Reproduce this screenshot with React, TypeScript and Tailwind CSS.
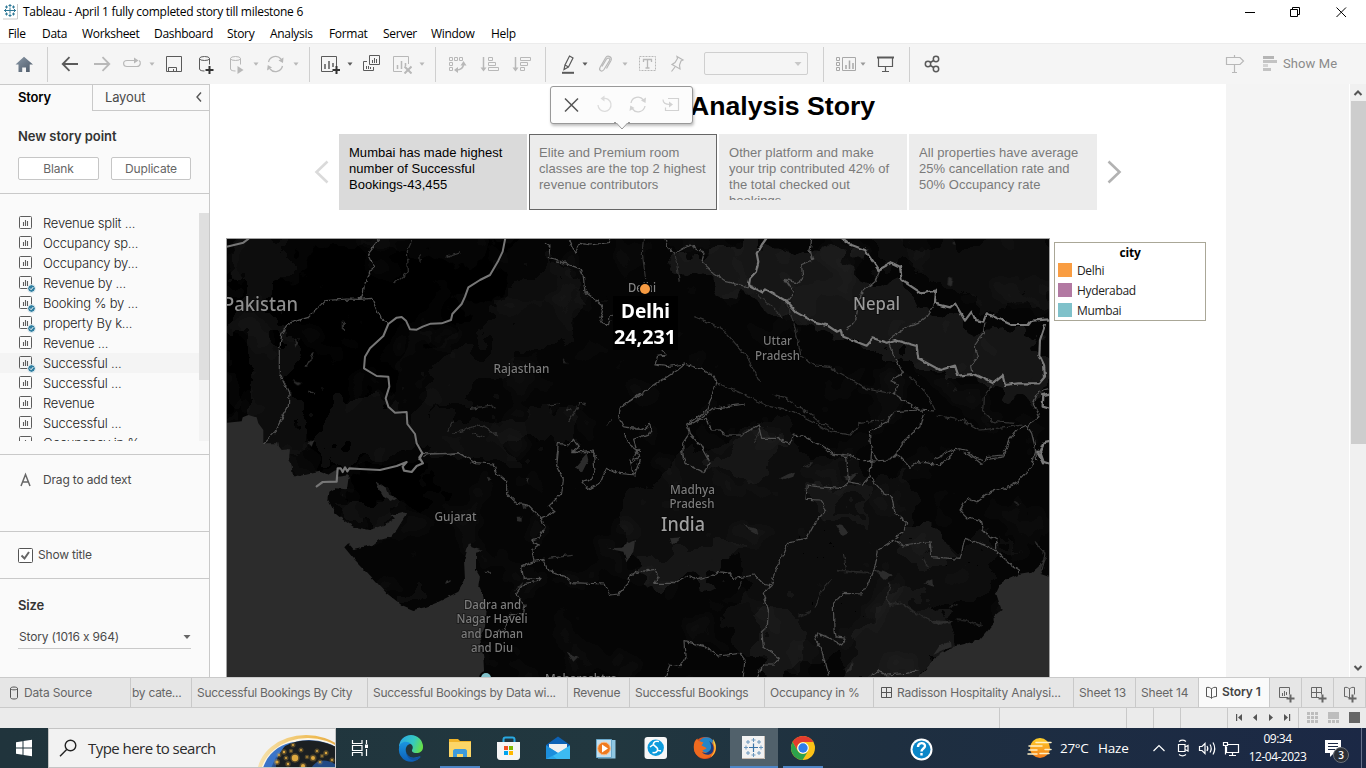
import type { ReactNode } from "react";

type Kids = { children?: ReactNode };

function Icon({ x, y = 54, w = 20, h = 20, className = "", children }: { x: number; y?: number; w?: number; h?: number; className?: string } & Kids) {
  return (
    <svg width={w} height={h} viewBox={`${x} ${y} ${w} ${h}`} fill="none" stroke="currentColor" className={`shrink-0 ${className}`}>
      {children}
    </svg>
  );
}

function Caret({ className }: { className: string }) {
  return (
    <svg width="6" height="20" viewBox="0 0 6 20" className={`shrink-0 ${className}`}>
      <path d="M0.5 8.5h5L3 11.8z" fill="currentColor" />
    </svg>
  );
}

const Divider = ({ className }: { className: string }) => <div className={`-mt-[7px] h-[35px] w-px shrink-0 bg-[#cfcfcf] ${className}`} />;

const DARK = "text-[#5a5a5a]";
const MUTED = "text-[#b8b8b8]";

function TitleBar() {
  return (
    <header className="flex h-[23px] shrink-0 items-center bg-white">
      <Icon x={2} y={3} w={17} h={17} className="ml-[2px] text-[#2f7896]">
        <path d="M17.5 4v15H3" stroke="#c9c9c9" />
        <path d="M10 7.5v6M7 10.500h6M10 4v3M8.500 5.500h3M10 14v3M8.500 15.500h3M4 10.500h3M5.500 9v3M13 10.500h3M14.500 9v3M6.500 5.500v3M5 7h3M13.500 5.500v3M12 7h3M6.500 12.500v3M5 14h3M13.500 12.500v3M12 14h3" />
      </Icon>
      <h1 className="ml-[4px] whitespace-nowrap pt-px font-['Open_Sans',sans-serif] text-[12px] tracking-[-0.28px] text-black">Tableau - April 1 fully completed story till milestone 6</h1>
      <Icon x={1244} y={3} w={14} h={14} className="ml-auto mr-[30px] text-black">
        <path d="M1245 10.500h10" />
      </Icon>
      <Icon x={1288} y={3} w={14} h={14} className="mr-[32px] text-black">
        <path d="M1290.500 7.500h7v7h-7zM1292.500 7v-1.500h7v7h-2" />
      </Icon>
      <Icon x={1334} y={3} w={14} h={14} className="mr-[18px] text-black">
        <path d="M1336.500 5.500l9.500 9.500M1346 5.500l-9.500 9.500" />
      </Icon>
    </header>
  );
}

const MENU: [string, string][] = [
  ["File", "w-[34px]"],
  ["Data", "w-[40px]"],
  ["Worksheet", "w-[72px]"],
  ["Dashboard", "w-[73px]"],
  ["Story", "w-[43px]"],
  ["Analysis", "w-[59px]"],
  ["Format", "w-[54px]"],
  ["Server", "w-[48px]"],
  ["Window", "w-[60px]"],
  ["Help", "w-[40px]"],
];

function MenuBar() {
  return (
    <nav className="flex h-[20px] shrink-0 items-center bg-white pl-[8px] pt-[2px] font-['Open_Sans',sans-serif] text-[12px] tracking-[-0.32px] text-black">
      {MENU.map(([label, width]) => (
        <span key={label} className={`${width} shrink-0`}>{label}</span>
      ))}
    </nav>
  );
}

function Toolbar() {
  return (
    <div className="flex h-[41px] shrink-0 items-start border-t border-[#ececec] bg-[#f5f5f5] pt-[10px]">
      <Icon x={14} className="ml-[14px]">
        <defs>
          <linearGradient id="home" x1="0" y1="0" x2="1" y2="1">
            <stop offset="0" stopColor="#8b99a8" />
            <stop offset="1" stopColor="#4a5766" />
          </linearGradient>
        </defs>
        <path d="M24 56.700L15.500 64.500h3V72h3.700v-4.500h3.800V72h3.700v-7.500H33z" fill="url(#home)" stroke="none" />
      </Icon>
      <Divider className="ml-[13px]" />
      <Icon x={60} className={`ml-[12px] ${DARK}`}>
        <path d="M62.500 64H78M69.500 57.200L62.700 64l6.800 6.800" strokeWidth="1.8" />
      </Icon>
      <Icon x={92} className={`ml-[12px] ${MUTED}`}>
        <path d="M94 64h15.500M102.500 57.200l6.800 6.800-6.800 6.800" strokeWidth="1.800" />
      </Icon>
      <Icon x={122} className={`ml-[10px] ${MUTED}`}>
        <path d="M139 60.500c2 1 2 6-2 6h-10c-4.500 0-4.500-6 0-6h8" strokeWidth="1.200" />
        <path d="M134 57.500l4.500 3-4.500 3z" fill="currentColor" stroke="none" />
      </Icon>
      <Caret className={`ml-[7px] ${MUTED}`} />
      <Icon x={164} className={`ml-[9px] ${DARK}`}>
        <path d="M166.500 56.500h15v15h-15zM168.500 71v-3.500h8V71M173.500 71v-2" />
      </Icon>
      <Icon x={196} className={`ml-[12px] ${DARK}`}>
        <ellipse cx="204.500" cy="58.500" rx="5" ry="2" />
        <path d="M199.500 58.500v10.500c0 1.500 3 2 5 2M209.500 58.500v6" />
        <path d="M209.500 66v8M205.500 70h8" strokeWidth="2" stroke="#333" />
      </Icon>
      <Icon x={226} className={`ml-[10px] ${MUTED}`}>
        <ellipse cx="235.500" cy="58.500" rx="5" ry="2" />
        <path d="M230.500 58.500v10.500c0 1.500 3 2 5 2M240.500 58.500v6" />
        <path d="M237.500 66l6 4-6 4z" fill="currentColor" stroke="none" />
      </Icon>
      <Caret className={`ml-[7px] ${MUTED}`} />
      <Icon x={266} className={`ml-[7px] ${MUTED}`}>
        <path d="M268.500 62a7.200 7.200 0 0 1 12.500-3M282.500 66a7.200 7.200 0 0 1-12.500 3" strokeWidth="1.300" />
        <path d="M283.500 57.500l-.5 5.500-4.500-2.500zM267 70.500l.8-5.500 4.200 2.500z" fill="currentColor" stroke="none" />
      </Icon>
      <Caret className={`ml-[7px] ${MUTED}`} />
      <Divider className="ml-[10px]" />
      <Icon x={320} className={`ml-[10px] ${DARK}`}>
        <path d="M333 71.500h-11.500v-15h15V67" />
        <path d="M325 64v5M329 61v8M333 63v4" strokeWidth="1.500" />
        <path d="M336.500 66v8M332.500 70h8" strokeWidth="2" stroke="#333" />
      </Icon>
      <Caret className={`ml-[7px] ${DARK}`} />
      <Icon x={361} className={`ml-[8px] ${DARK}`}>
        <path d="M369.500 55.500h10v9h-10zM367 61.500h-3.500v9h10V67" />
        <path d="M372.500 60v3M374.500 58v5M376.500 59v4M366.500 66v3M368.500 66v3M370.500 67v2" />
      </Icon>
      <Icon x={392} className={`ml-[11px] ${MUTED}`}>
        <path d="M402 71.500h-8.500v-15h15V64" />
        <path d="M397.500 65v4M401.500 61v8M405.500 63v3" strokeWidth="1.500" />
        <path d="M404.500 66.500l7 7M411.500 66.500l-7 7" strokeWidth="2" />
      </Icon>
      <Caret className={`ml-[7px] ${MUTED}`} />
      <Divider className="ml-[10px]" />
      <Icon x={448} className={`ml-[12px] ${MUTED}`}>
        <path d="M449.500 57.500h3v3h-3zM454.500 57.500h3v3h-3zM459.500 57.500h3v3h-3zM449.500 62.500h3v3h-3zM449.500 67.500h3v3h-3z" />
        <path d="M456 70c5 0 7.500-2 7.500-6.500" strokeWidth="1.500" />
        <path d="M458 67v6l-4-3zM460.500 65.500h6L463.500 61z" fill="currentColor" stroke="none" />
      </Icon>
      <Icon x={480} className={`ml-[12px] ${MUTED}`}>
        <path d="M483.500 57v12" strokeWidth="1.500" />
        <path d="M480.500 67.500h6l-3 4z" fill="currentColor" stroke="none" />
        <path d="M488.500 57.500h4v3h-4zM488.500 62.500h7v3h-7zM488.500 67.500h10v3h-10z" />
      </Icon>
      <Icon x={512} className={`ml-[12px] ${MUTED}`}>
        <path d="M515.500 57v12" strokeWidth="1.500" />
        <path d="M512.500 67.500h6l-3 4z" fill="currentColor" stroke="none" />
        <path d="M520.500 57.500h10v3h-10zM520.500 62.500h7v3h-7zM520.500 67.500h4v3h-4z" />
      </Icon>
      <Divider className="ml-[13px]" />
      <Icon x={558} className={`ml-[12px] ${DARK}`}>
        <path d="M569.500 56l3.500 2-4.500 9-3.500-2zM565 65l-1 4.500 4.500-2.500" strokeWidth="1.200" />
        <path d="M562 72.800h12" strokeWidth="2" />
      </Icon>
      <Caret className={`ml-[4px] ${DARK}`} />
      <Icon x={596} className={`ml-[8px] ${MUTED}`}>
        <path d="M602 66.500l4.500-7.500c1.500-2 4-.5 3 1.500l-5.500 9c-2 3-5.500 1-4-2l5.500-9.500c2-3.500 7-1 5.500 2.500l-4.500 8" strokeWidth="1.200" />
      </Icon>
      <Caret className={`ml-[6px] ${MUTED}`} />
      <Icon x={638} className={`ml-[10px] ${MUTED}`}>
        <path d="M639.500 56.500h16v14h-16z" strokeDasharray="2 1" />
        <path d="M643.500 62v-2.500h8V62M647.500 59.500v8M645.500 68h4" strokeWidth="1.300" />
      </Icon>
      <Icon x={668} className={`ml-[10px] ${MUTED}`}>
        <path d="M677 56.500l6 3.500-2 1-1.500 4 .5 4-8-4.500 3-2 2.500-4zM675 67l-3.500 4.500" strokeWidth="1.200" />
      </Icon>
      <div className="-mt-[2px] ml-[16px] flex h-[23px] w-[104px] shrink-0 items-center justify-end rounded-[2px] border border-[#cfcfcf] pr-[5px]">
        <svg width="8" height="6" viewBox="0 0 8 6"><path d="M.5 1h7L4 5z" fill="#c8c8c8" /></svg>
      </div>
      <Divider className="ml-[15px]" />
      <Icon x={836} className="ml-[12px] text-[#a8a8a8]">
        <path d="M836.500 57.500h3v3h-3zM836.500 62.500h3v3h-3zM836.500 67.500h3v3h-3zM842.500 57.500h13v13h-13z" />
        <path d="M846 65v4M849.500 60.500V69M853 63v6" strokeWidth="1.500" />
      </Icon>
      <Caret className="ml-[4px] text-[#999]" />
      <Icon x={876} className={`ml-[10px] ${DARK}`}>
        <path d="M877 57.500h17" strokeWidth="2" />
        <path d="M878.500 58v8.500h14V58M885.500 66.500v5M882 71.500h7" strokeWidth="1.200" />
      </Icon>
      <Divider className="ml-[13px]" />
      <Icon x={922} className={`ml-[12px] ${DARK}`}>
        <g strokeWidth="1.500">
          <circle cx="928" cy="64" r="2.700" />
          <circle cx="936" cy="59" r="2.700" />
          <circle cx="936" cy="69" r="2.700" />
          <path d="M930.300 62.500l3.400-2M930.300 65.500l3.400 2" />
        </g>
      </Icon>
      <Icon x={1225} className={`ml-[283px] ${MUTED}`}>
        <path d="M1234.500 55v2M1226.500 57.500h13.500l3.500 3.500-3.500 3.500h-13.500zM1234.500 65v7M1232 72.500h5" strokeWidth="1.200" />
      </Icon>
      <Icon x={1260} className="ml-[15px]">
        <g stroke="none" fill="#b5b5b5">
          <path d="M1263 56h11v3h-11z" />
          <path d="M1263 60h14v3h-14zM1263 68h8v3h-8z" fill="#c3c3c3" />
          <path d="M1263 64h5v3h-5z" fill="#d4d4d4" />
        </g>
      </Icon>
      <span className="ml-[3px] whitespace-nowrap font-[Roboto,sans-serif] text-[13px] leading-[20px] tracking-[0.1px] text-[#8a8a8a]">Show Me</span>
    </div>
  );
}

const SHEETS: [string, boolean][] = [
  ["Revenue split ...", false],
  ["Occupancy sp...", false],
  ["Occupancy by...", false],
  ["Revenue by ...", true],
  ["Booking % by ...", true],
  ["property By k...", true],
  ["Revenue ...", false],
  ["Successful ...", true],
  ["Successful ...", false],
  ["Revenue", false],
  ["Successful ...", false],
  ["Occupancy in %", false],
];

function SheetIcon({ used }: { used: boolean }) {
  return (
    <svg width="18" height="20" viewBox="0 0 18 20" fill="none" stroke="#5c5c5c" className="shrink-0">
      <rect x="1.500" y="3.500" width="12" height="12" rx="1" />
      <path d="M5.500 9v4M7.500 7v6M9.500 8v5" strokeWidth="1.100" />
      {used && (
        <>
          <circle cx="13.500" cy="15.500" r="3.900" fill="#2f7ea0" stroke="#fafafa" />
          <path d="M11.800 15.400l1.300 1.300 2.200-2.600" stroke="#fff" />
        </>
      )}
    </svg>
  );
}

function Sidebar() {
  return (
    <aside className="flex w-[210px] shrink-0 flex-col border-r border-t border-[#c9c9c9] bg-[#fafafa] font-[Inter,'Open_Sans',sans-serif] text-[12px] tracking-[-0.17px] text-[#4a4a4a] [font-variant-ligatures:none]">
      <div className="flex h-[26px] shrink-0">
        <div className="w-[92px] pl-[18px] pt-[3px] text-[13px] font-semibold leading-[18px] text-black">Story</div>
        <div className="flex flex-1 items-start justify-between border-b border-l border-[#c9c9c9] pl-[12px] pr-[7px] pt-[3px] text-[13px] leading-[18px]">
          Layout
          <svg width="6" height="10" viewBox="0 0 6 10" className="mt-[4px]"><path d="M5 .5L1 5l4 4.500" fill="none" stroke="#555" strokeWidth="1.400" /></svg>
        </div>
      </div>
      <div className="h-[83px] shrink-0 border-b border-[#c9c9c9] pl-[18px] pt-[16px]">
        <h2 className="text-[13px] font-semibold leading-[18px] tracking-[-0.06px] text-[#333]">New story point</h2>
        <div className="mt-[12px] flex gap-[12px] leading-[20px] text-[#666]">
          <button className="h-[23px] w-[81px] rounded-[2px] border border-[#c6c6c6] bg-white tracking-[-0.17px]">Blank</button>
          <button className="h-[23px] w-[80px] rounded-[2px] border border-[#c6c6c6] bg-white tracking-[-0.17px]">Duplicate</button>
        </div>
      </div>
      <div className="h-[261px] shrink-0 border-b border-[#c9c9c9] pt-[19px]">
        <div className="flex h-[228px] overflow-hidden">
          <ul className="w-[199px]">
            {SHEETS.map(([name, used], i) => (
              <li key={i} className={`flex h-[20px] items-center pl-[18px] text-[13px] ${i === 7 ? "bg-[#f4f4f4]" : ""}`}>
                <SheetIcon used={used} />
                <span className="ml-[7px] whitespace-nowrap font-light leading-[20px] tracking-[-0.2px] text-[#222]">{name}</span>
              </li>
            ))}
          </ul>
          <div className="w-[10px] bg-[#f3f3f3]"><div className="h-[167px] bg-[#dfdfdf]" /></div>
        </div>
      </div>
      <div className="flex h-[77px] shrink-0 items-start border-b border-[#c9c9c9] pl-[20px] pt-[15px]">
        <svg width="12" height="20" viewBox="0 0 12 20"><path d="M1 16L5.500 4.500 10 16M2.500 12h6" fill="none" stroke="#666" strokeWidth="1.500" /></svg>
        <span className="ml-[11px] leading-[20px]">Drag to add text</span>
      </div>
      <div className="flex h-[47px] shrink-0 items-center border-b border-[#c9c9c9] pl-[18px]">
        <svg width="15" height="15" viewBox="0 0 15 15" fill="none"><rect x=".5" y=".5" width="14" height="14" rx="1" stroke="#555" fill="#fff" /><path d="M3.500 7.500l3 3L11 4" stroke="#666" strokeWidth="2" /></svg>
        <span className="ml-[5px]">Show title</span>
      </div>
      <div className="pl-[18px] pt-[17px]">
        <h2 className="text-[13px] font-semibold leading-[18px] text-[#333]">Size</h2>
        <div className="mt-[13px] flex h-[22px] w-[173px] items-center justify-between border-b border-[#c9c9c9] pb-px pl-[1px]">
          Story (1016 x 964)
          <svg width="8" height="6" viewBox="0 0 8 6"><path d="M0.500 1h7L4 5z" fill="#666" /></svg>
        </div>
      </div>
    </aside>
  );
}

/* Map tiles: each quadrant is drawn on its own 3x grid. */
const NW = "translate(220 230) scale(.33333)";
const NE = "translate(630 230) scale(.33333)";
const SW = "translate(220 450) scale(.33333)";
const SE = "translate(630 450) scale(.33333)";

const LABELS: [string, number, number, number, number, string][] = [
  ["Pakistan", 223, 311, 75, 19, "#8f8f8f"],
  ["Nepal", 853, 310, 47, 18, "#9a9a9a"],
  ["India", 661, 531, 44, 19, "#a0a0a0"],
  ["Rajasthan", 493.500, 373, 56, 12, "#7c7c7c"],
  ["Uttar", 763, 345, 29, 12, "#7c7c7c"],
  ["Pradesh", 755, 360, 45, 12, "#7c7c7c"],
  ["Gujarat", 434.500, 521, 42, 12, "#7c7c7c"],
  ["Madhya", 670, 494, 45, 12, "#7c7c7c"],
  ["Pradesh", 669.500, 508, 45, 12, "#7c7c7c"],
  ["Dadra and", 464, 609, 57, 12, "#7c7c7c"],
  ["Nagar Haveli", 456.500, 623, 71, 12, "#7c7c7c"],
  ["and Daman", 461, 638, 62, 12, "#7c7c7c"],
  ["and Diu", 471, 652, 42, 12, "#7c7c7c"],
  ["Maharashtra", 545, 683, 72, 12, "#7c7c7c"],
];

function CityMap() {
  return (
    <svg width="822" height="438" viewBox="227 239 822 438" fill="none" className="block">
      <defs>
        <filter id="rough" x="227" y="239" width="822" height="438" filterUnits="userSpaceOnUse">
          <feTurbulence type="fractalNoise" baseFrequency=".16" numOctaves="3" seed="4" />
          <feDisplacementMap in="SourceGraphic" scale="5" xChannelSelector="R" yChannelSelector="G" />
        </filter>
        <filter id="soft" x="227" y="239" width="822" height="438" filterUnits="userSpaceOnUse" colorInterpolationFilters="sRGB">
          <feTurbulence type="fractalNoise" baseFrequency=".13" numOctaves="2" seed="4" />
          <feDisplacementMap in="SourceGraphic" scale="4" xChannelSelector="R" yChannelSelector="G" />
        </filter>
        <filter id="terrain" x="227" y="239" width="822" height="438" filterUnits="userSpaceOnUse">
          <feTurbulence type="fractalNoise" baseFrequency=".035" numOctaves="3" seed="9" />
          <feDisplacementMap in="SourceGraphic" scale="60" xChannelSelector="R" yChannelSelector="G" />
        </filter>
        <filter id="relief" x="227" y="239" width="822" height="438" filterUnits="userSpaceOnUse" colorInterpolationFilters="sRGB">
          <feTurbulence type="fractalNoise" baseFrequency=".022" numOctaves="3" seed="21" />
          <feColorMatrix values="0 0 0 0 1  0 0 0 0 1  0 0 0 0 1  1 0 0 0 0" />
          <feComponentTransfer>
            <feFuncA type="discrete" tableValues="0 0 0 0 0 0 .015 .025 .032 .032" />
          </feComponentTransfer>
        </filter>
      </defs>
      <rect x="227" y="239" width="822" height="438" fill="#050505" />

      <g filter="url(#terrain)">
        <g fill="#000">
          <path d="M227 280h60l30-40 70 0 80 30 40-40-10 60-60 40-60 60-20 30 40 30-60 20-50-60-60 20z" />
          <path d="M227 350h20v80h-20zM350 470h80v30h-60z" />
        </g>
        <g fill="#0e0e0e">
          <path d="M235 239h60l-20 40 10 60 20 100-20 20-50-10 20-60-20-60zM500 290l50-30 40 30-10 50-60 20-80 60-30 10 20-60 60-30zM400 430l80-20 100 0 0 30-80 20-60 0z" />
          <path d="M330 400l60-10 30 50-40 20-50 0zM330 490l60 10 0 30-40-10zM395 590l30 5 0 12-30 0z" />
          <path d="M690 440l90-20 40 40 90 10 0 80 90-10-20 60-80 20 0 50-80-10-30 30-60-60 20-60-110 0-30-60 50-30z" />
          <path d="M860 239h189v60l-60 10-60-30-50-20z" />
        </g>
        <g fill="#171717">
          <path d="M690 245l70-5 90 10 40 40 40 25 60 20 50-5-5 70-80-20-80-40-100-20-60-40-40-10z" />
          <path d="M730 440l40-10 10 20-30 30-40-10zM810 490l50-5 10 40-50 0zM640 570l70-30 40 10-40 25-60 10zM880 600l50 0 30 20-40 60h-60l-10-40zM760 610l40 0 10 60-50 6z" />
          <path d="M890 540l40-20 30 30-40 20z" />
        </g>
        <g fill="#070707">
          <path d="M790 545l50-5 30 30-20 35-50-5zM840 500l20 0 0 15-20 0zM940 560l40 5 0 30-40 0z" />
        </g>
      </g>
      <rect x="227" y="239" width="822" height="438" filter="url(#relief)" />

      {/* Seas */}
      <g fill="#2c2c2c">
        <path transform={NW} d="M20 578L65 574L68 562L85 555L110 562L115 580L130 600L130 642L165 655L178 650L185 660L210 658L205 690L20 690z" />
        <g filter="url(#soft)">
          <path transform={SW} d="M-20 -20L172 -20L175 0L190 5L205 0L205 30L215 45L218 75L240 78L300 65L325 76L350 60L353 80L390 75L385 110L380 118L345 115L328 125L325 150L345 190L370 210L400 230L450 240L490 225L525 205L512 196L545 187L562 190L545 215L530 240L510 262L480 270L460 285L430 290L400 297L385 280L373 292L400 325L440 365L500 430L545 465L580 480L615 472L650 458L715 425L735 390L732 330L747 278L755 292L788 302L768 308L768 360L780 380L775 410L790 440L800 480L795 530L780 565L790 620L795 720L-20 720z" />
          <path transform={SE} d="M1300 395L1232 372L1250 320L1225 350L1205 368L1165 375L1130 390L1110 405L1098 430L1115 480L1090 500L1092 520L1050 570L970 590L920 620L870 675L860 720L1300 720z" />
          <path transform={SE} d="M910 615L930 585L960 575L962 590L930 605z" />
          <g transform={SW}>
            <path d="M465 90L500 115L508 135L528 142L512 153L490 140L478 120z" />
            <path d="M1160 295L1205 293L1225 280L1245 270L1240 305L1220 335L1210 305zM1065 50L1100 10L1105 30L1085 70zM800 83L815 88L805 93zM890 200L905 200L905 215L892 213zM1040 605L1075 620L1060 635zM880 425L910 395L905 410zM905 160L930 165L910 178z" />
          </g>
          <g transform={SE}>
            <path d="M450 85L475 72L495 68L490 80L462 90zM640 80L685 68L660 95L648 90zM338 220L360 235L385 240L388 255L350 235zM618 225L640 228L655 250L638 258zM735 360L760 362L790 375L765 390zM880 400L910 388L912 410zM865 490L905 510L970 515L925 525zM120 265L155 262L125 285zM650 670L668 632L665 660z" />
          </g>
          <g transform={NE}>
            <path d="M955 140L970 145L965 170L952 165zM970 32L978 45L968 42z" />
          </g>
          <g transform={NW}>
            <path d="M225 325L235 340L228 350zM215 450L245 460L235 466zM195 395L205 410zM265 640L285 625L275 650zM1028 388L1045 398L1030 396z" />
          </g>
        </g>
      </g>

      {/* Rivers */}
      <g filter="url(#rough)" stroke="#343434" strokeWidth="3.500">
        <path transform={NW} d="M575 30L562 60L565 125L520 160M600 75V95M680 82L722 68M370 275V300M280 370L258 410M265 480L285 492M750 535L790 530L810 525L830 535M985 525L1020 522M1040 537L1055 540M1045 575L1080 515L1095 522M680 605L697 575M697 610L735 600L775 585L810 600L830 618M757 610L795 622M1160 590L1175 568" />
        <path transform={NE} d="M40 28L37 70L47 150M135 70L148 155M193 260L245 280L285 305L320 345L350 378L390 455M380 190L420 225L460 265M468 215L495 290L512 375L555 408L600 412L650 440L705 475L790 492M260 458L310 480L365 505L420 530L490 545L550 575L600 605L665 615L690 580L760 570M425 495L465 505L520 540L565 572L610 600M840 440L890 490L915 540M920 555L1000 572L1050 600L1130 592L1175 585M1090 460L1060 500L1058 545L1090 575L1155 580M370 640L390 600" />
        <path transform={SW} d="M985 325L1058 316M795 367L812 368M673 400L692 392M925 85L920 100" />
        <path transform={SE} d="M640 310L650 360M618 362L720 368M555 475L570 430L605 385M505 500L540 485M780 400L770 450L780 465L815 460L855 490L925 520L970 512M980 507L1020 515L1055 527M880 325L895 355M955 475L980 462M1215 275L1245 310L1235 370M1150 155L1168 165M522 50L545 38M325 415L335 395" />
      </g>

      {/* State borders */}
      <g filter="url(#rough)" stroke="#525252" strokeWidth="3.700" strokeLinejoin="round">
        <path transform={NW} d="M475 30L443 70L462 110L433 160L430 190L418 208M418 208L380 207L318 212L265 262L205 280L185 315L178 360L178 430L207 490L205 530L180 575L165 605L130 640M418 208L455 205L470 240L480 262L505 280M975 40L990 50L985 85L1020 95L1078 115L1090 140L1095 185L1140 220L1150 245L1138 275L1165 287L1170 262L1178 255M1045 28L1065 70L1080 40L1110 45L1165 38L1170 28M607 680L640 670L690 672L715 668L745 685M1260 490L1220 520L1200 535L1197 565L1210 590L1245 595L1260 590M1010 690L1015 640L1050 645L1060 628L1075 650L1055 665L1095 665L1120 670L1135 690M1212 610L1225 640L1260 665" />
        <path transform={NE} d="M105 30L115 55L135 70L180 45L222 70L215 98L245 125L290 155L350 170L370 170M545 30L540 60L548 90L515 105L518 140L505 160L465 148L490 185L470 213M750 120L735 155L705 180L690 195L678 265L650 300M910 225L890 260L865 280L835 290L785 320L770 340M1065 275L1060 310L1035 345L1045 380L1025 405L1028 430M780 340L790 375L820 430L780 450L805 465L790 492L865 540L915 543M0 515L60 475L150 415L165 402L110 410L75 405L82 380L105 375L90 345M165 402L215 418L245 435L260 458L230 540L190 570L170 582L178 610L158 640L160 690M0 597L40 598L60 580L65 608L10 628L20 660L8 690M170 582L230 565L245 600L275 600L280 615L335 615L385 585L395 625L440 625L480 640L490 615L525 620L590 655L610 670L655 675L690 690M190 580L245 535L290 530L345 522M178 610L210 645L235 690M910 690L975 655L1010 660L1030 680L1065 690L1120 680L1135 635L1160 600L1190 585L1205 610L1215 650L1220 690M1190 585L1230 560L1210 520L1225 485L1258 475M865 540L795 545L770 575L718 605L722 650L740 690M880 550L870 590L830 625L790 685" />
        <path transform={SW} d="M607 10L640 12L715 8L765 38L820 42L830 70L860 95L860 130L890 160L925 165L965 205L975 235L960 262L935 270L955 285L935 300L942 335L905 350L910 385L960 382L950 395L915 400L890 430L915 465L910 495L870 490L855 540L830 545M965 203L1005 185L985 170L1025 130L1030 90L1010 50L1015 0M942 335L970 328L985 365L1035 380L1055 398L1155 402L1170 435L1195 432L1225 400L1230 375L1258 360M1050 0L1080 5L1120 0L1125 65L1115 85L1085 95L1105 118L1140 100L1160 55L1200 70L1245 75L1258 30" />
        <path transform={SE} d="M0 378L30 365L75 358L85 380L75 400L130 400L170 378L200 390L240 380L265 365L300 370L310 385L375 375L400 402L425 408M425 408L435 360L455 320L475 275L530 265L560 210L590 180L570 150L528 148L532 105L560 110L630 115L655 95L650 20L595 10L590 0M655 95L700 105L720 80L725 0M720 80L760 130L785 140L795 190L830 215L820 245L790 270L745 300L735 350L715 400L695 432L640 430L610 460L612 540L615 560M790 270L820 285L900 275L905 320L990 328L1005 265L1050 280L1095 300L1145 345L1168 360L1168 375M425 408L400 430L415 480L412 530L395 545L400 590L448 625L430 645L400 645L382 680M105 680L120 645L150 650L168 620L165 575L225 590L265 618L330 610L345 630L340 680M155 0L165 40L220 68L240 40L230 10M595 680L580 620L572 590L555 570L565 550L600 565L635 585L648 565L615 560M700 35L780 30L800 10L840 52L865 35L930 45L970 10L975 0M1000 5L1040 30L1058 45L1070 20L1120 15L1125 0M1218 0L1205 50L1165 95L1130 115L1080 125L1040 158L1010 145L990 180L1015 205L1055 215L1060 245L1100 270L1100 305M1100 305L1145 345M0 30L10 75M15 0L30 20L5 40M720 680L748 662L770 675L830 670L865 662" />
      </g>

      {/* Country borders */}
      <g stroke="#777" strokeLinejoin="round" strokeLinecap="round">
        <path transform={NW} strokeWidth="6" d="M20 50L70 38L85 27M856 24L848 65L835 92L810 135L780 150L745 172L735 200L725 222L697 252L693 270L665 280L632 281L608 290L590 299L570 298L558 272L545 261L530 263L505 282L490 318L450 355L435 380L432 415L470 438L505 440L508 470L497 505L505 530L525 548L560 546L562 582L585 612L590 640L607 670L598 688" />
        <path transform={SW} strokeWidth="6.500" d="M607 10L598 22L609 40L590 48L575 66L552 62L548 50L560 36L530 48L480 60L420 57L388 55L382 64L375 52L368 66L362 55L353 55L350 95L308 96L290 109" />
        <g filter="url(#soft)" stroke="#7a7a7a">
          <path transform={NE} strokeWidth="6.500" d="M410 24L395 45L380 70L385 95L378 125L360 145L357 165L398 188L408 178L468 213L500 248L550 275L590 285L620 305L635 300L640 320L710 347L730 325L770 338L795 330L860 348L865 385L930 420L975 407L985 437L1030 432L1090 460L1118 437L1125 465L1165 460L1228 460L1245 440L1242 405L1228 375L1230 330L1245 285M635 24L665 45L705 60L745 120L785 98L810 110L815 150L875 190L915 182L912 220L960 232L975 220L1005 272L1025 245L1035 270L1060 275L1070 250L1145 285L1195 285L1205 272L1258 268" />
          <path transform={NE} strokeWidth="7" d="M1262 490L1240 495L1238 530L1262 537M1262 635L1240 640L1230 665L1242 700" />
          <path transform={SE} strokeWidth="6" d="M1222 5L1240 35L1262 42" />
        </g>
      </g>

      <text x="628" y="292" fontSize="12" fontWeight="500" fill="#858585" fontFamily="'Noto Sans'" textLength="28" lengthAdjust="spacingAndGlyphs">Delhi</text>
      {LABELS.map(([label, x, y, width, size, fill]) => (
        <text key={label + x} x={x} y={y} fontSize={size} fontWeight="500" fill={fill} stroke="#000" strokeOpacity=".35" strokeWidth="2" paintOrder="stroke" fontFamily="'Noto Sans'" textLength={width} lengthAdjust="spacingAndGlyphs">
          {label}
        </text>
      ))}
      <circle cx="645" cy="289" r="6.500" fill="#050505" />
      <circle cx="645" cy="289" r="5" fill="#f79b42" />
      <circle cx="486" cy="678" r="7" fill="#050505" />
      <circle cx="486" cy="678" r="5" fill="#82c2cb" />
      <path d="M613 296h65v54h-65z" fill="#000" />
      <g fill="#fff" fontFamily="'Noto Sans'" fontWeight="700" fontSize="19.500">
        <text x="621" y="318" textLength="49" lengthAdjust="spacingAndGlyphs">Delhi</text>
        <text x="614" y="344" textLength="62" lengthAdjust="spacingAndGlyphs">24,231</text>
      </g>
    </svg>
  );
}

const POINTS: [string[], string][] = [
  [["Mumbai has made highest", "number of Successful", "Bookings-43,455"], "bg-[#dadada] text-black"],
  [["Elite and Premium room", "classes are the top 2 highest", "revenue contributors"], "bg-[#ececec] text-[#7a7a7a] outline outline-1 -outline-offset-1 outline-[#666]"],
  [["Other platform and make", "your trip contributed 42% of", "the total checked out", "bookings"], "bg-[#ececec] text-[#7a7a7a]"],
  [["All properties have average", "25% cancellation rate and", "50% Occupancy rate"], "bg-[#ececec] text-[#7a7a7a]"],
];

const LEGEND: [string, string][] = [
  ["Delhi", "bg-[#f99d42]"],
  ["Hyderabad", "bg-[#b279a2]"],
  ["Mumbai", "bg-[#7fc1ca]"],
];

function StoryPopover() {
  return (
    <div className="absolute left-[340px] top-[2px] flex h-[38px] w-[143px] items-center rounded-[3px] border border-[#999] bg-[#fcfcfc] pl-[10px] shadow-[1px_2px_3px_rgba(0,0,0,0.25)]">
      <Icon x={561} y={95} className="text-[#555]"><path d="M565 98.500l13 13M578 98.500l-13 13" strokeWidth="1.500" /></Icon>
      <Icon x={594} y={95} className="ml-[13px] text-[#dcdcdc]">
        <path d="M603 98.500a6.500 6.500 0 1 1-5 6.500" strokeWidth="1.300" /><path d="M604.500 95.500v6l-4-3z" fill="currentColor" stroke="none" />
      </Icon>
      <Icon x={628} y={95} className="ml-[14px] text-[#d2d2d2]">
        <path d="M631 103a7 7 0 0 1 12.500-3M645 106a7 7 0 0 1-12.500 3" strokeWidth="1.300" />
        <path d="M646 97.500l-.5 5.500-4.500-2.500zM629.500 111l.8-5.500 4.200 2.500z" fill="currentColor" stroke="none" />
      </Icon>
      <Icon x={661} y={95} className="ml-[13px] text-[#d2d2d2]">
        <path d="M668 98.500h10.500v12h-13v-3M663 99.500c0 3 2 5 7 5" strokeWidth="1.200" /><path d="M669 101.500v6l4-3z" fill="currentColor" stroke="none" />
      </Icon>
      <svg width="16" height="8" viewBox="0 0 16 8" className="absolute left-[63px] top-[35px]">
        <path d="M0 0.500h2L8 7l6-6.500h2" fill="#fcfcfc" stroke="#999" />
        <path d="M2 0h12v1H2z" fill="#fcfcfc" />
      </svg>
    </div>
  );
}

function Canvas() {
  return (
    <main className="relative flex w-[1016px] shrink-0 flex-col overflow-hidden bg-white">
      <h2 className="h-[50px] shrink-0 pl-[480px] pt-[7px] font-['Liberation_Sans',sans-serif] text-[26.67px] font-bold leading-[30px] text-black">Analysis Story</h2>
      <div className="flex h-[76px] shrink-0 items-center">
        <svg width="16" height="26" viewBox="0 0 16 26" className="-mt-px ml-[104px] shrink-0"><path d="M13.500 2.500L2.500 13l11 10.500" fill="none" stroke="#dadada" strokeWidth="2.600" /></svg>
        <div className="ml-[9px] flex gap-[2px]">
          {POINTS.map(([lines, tone], i) => (
            <div key={i} className={`h-[76px] w-[188px] px-[10px] pt-[11px] ${tone}`}>
              <p className="h-[55px] overflow-hidden whitespace-nowrap font-['Liberation_Sans',sans-serif] text-[13px] leading-[16px] tracking-[0.04px]">
                {lines.map((line) => (
                  <span key={line} className="block">{line}</span>
                ))}
              </p>
            </div>
          ))}
        </div>
        <svg width="16" height="26" viewBox="0 0 16 26" className="-mt-px ml-[9px] shrink-0"><path d="M2.500 2.500l11 10.500-11 10.500" fill="none" stroke="#b2b2b2" strokeWidth="2.600" /></svg>
      </div>
      <div className="mt-[28px] flex items-start pl-[16px]">
        <div className="border border-b-0 border-[#a3a3a3]"><CityMap /></div>
        <section className="ml-[4px] mt-[4px] h-[79px] w-[152px] border border-[#aaa797] font-['Open_Sans',sans-serif] text-[12px] text-[#222]">
          <h3 className="h-[17px] text-center font-bold leading-[19px] tracking-[-0.2px] text-black">city</h3>
          <ul>
            {LEGEND.map(([city, swatch]) => (
              <li key={city} className="flex h-[20px] items-center pl-[3px] tracking-[-0.35px]">
                <span className={`mr-[5px] size-[14px] ${swatch}`} />
                <span className="pt-[2px]">{city}</span>
              </li>
            ))}
          </ul>
        </section>
      </div>
      <StoryPopover />
    </main>
  );
}

function Scrollbar() {
  return (
    <div className="ml-auto flex w-[17px] flex-col items-center border-l border-white bg-[#f0f0f0] py-[5px]">
      <svg width="10" height="8" viewBox="0 0 10 8"><path d="M1.500 6L5 2.500 8.500 6" fill="none" stroke="#555" strokeWidth="2" /></svg>
      <div className="mt-[4px] h-[343px] w-[15px] bg-[#cdcdcd]" />
      <svg width="10" height="8" viewBox="0 0 10 8" className="mt-auto"><path d="M1.500 2L5 5.500 8.500 2" fill="none" stroke="#555" strokeWidth="2" /></svg>
    </div>
  );
}

const TAB = "flex h-full shrink-0 items-center border-r border-[#c9c9c9] whitespace-nowrap overflow-hidden";

const TABS: [string, string][] = [
  ["by cate...", "w-[61px] pl-[1px]"],
  ["Successful Bookings By City", "w-[176px] pl-[5px]"],
  ["Successful Bookings by Data wi...", "w-[200px] pl-[5px]"],
  ["Revenue", "w-[62px] pl-[5px]"],
  ["Successful Bookings", "w-[135px] pl-[5px]"],
  ["Occupancy in %", "w-[109px] pl-[5px]"],
];

function SheetTabs() {
  return (
    <div className="flex h-[31px] shrink-0 items-center border-b border-t border-[#cacaca] bg-[#e6e6e6] font-[Inter,'Open_Sans',sans-serif] text-[12px] tracking-[-0.27px] text-[#666]">
      <div className={`${TAB} w-[131px]`}>
        <Icon x={8} y={682} w={12} className="ml-[8px] text-[#555]"><path d="M10.500 687.500v9c0 2 7 2 7 0v-9c0-2-7-2-7 0zc0 1.800 7 1.800 7 0" /></Icon>
        <span className="ml-[4px] tracking-[-0.15px]">Data Source</span>
      </div>
      {TABS.map(([label, cls]) => (
        <div key={label} className={`${TAB} ${cls}`}>{label}</div>
      ))}
      <div className={`${TAB} w-[200px] pl-[6px]`}>
        <Icon x={880} y={682} w={12} className="text-[#555]"><path d="M881.500 686.500h10v10h-10zM886.500 686v11M881 691.500h11" /></Icon>
        <span className="ml-[5px] tracking-[-0.2px]">Radisson Hospitality Analysi...</span>
      </div>
      <div className={`${TAB} w-[62px] pl-[5px] tracking-[-0.17px]`}>Sheet 13</div>
      <div className={`${TAB} w-[63px] pl-[5px] tracking-[-0.17px]`}>Sheet 14</div>
      <div className={`${TAB} w-[71px] bg-[#fafafa] pl-[5px] font-semibold text-[#444]`}>
        <Icon x={1204} y={682} w={14}><path d="M1206.500 686.500c2-.5 4 0 5 1.500 1-1.500 3-2 5-1.500v9c-2 0-4 .5-5 2-1-1.500-3-2-5-2zM1211.500 688v9" stroke="#555" /></Icon>
        <span className="ml-[4px] pb-px tracking-[-0.1px]">Story 1</span>
      </div>
      <div className={`${TAB} w-[32px] pl-[7px] text-[#666]`}>
        <Icon x={1277} y={682}>
          <path d="M1288 696.500h-8.500v-10h10v7M1282.500 692v3M1284.500 690v5M1286.500 691v3" /><path d="M1290.500 693.500v8M1286.500 697.500h8" strokeWidth="2" />
        </Icon>
      </div>
      <div className={`${TAB} w-[32px] pl-[7px] text-[#666]`}>
        <Icon x={1309} y={682}>
          <path d="M1319 696.500h-7.500v-10h10v7M1316.500 686v10M1311 691.500h11" /><path d="M1322.500 693.500v8M1318.500 697.500h8" strokeWidth="2" />
        </Icon>
      </div>
      <div className={`${TAB} w-[32px] pl-[7px] text-[#666]`}>
        <Icon x={1341} y={682}>
          <path d="M1351 697l-1.500.5c-1-1.500-3-2-5-2v-9c2-.5 4 0 5 1.500 1-1.500 3-2 5-1.500v7M1349.500 688v9" /><path d="M1352.500 693.500v8M1348.500 697.500h8" strokeWidth="2" />
        </Icon>
      </div>
    </div>
  );
}

function StatusBar() {
  return (
    <div className="flex h-[20px] shrink-0 justify-end bg-[#ebebeb] [&>*]:h-full [&>*]:border-l [&>*]:border-[#c9c9c9]">
      <div className="w-[127px]" />
      <div className="w-[27px]" />
      <div className="w-[27px]" />
      <div className="w-[47px]" />
      <div className="w-[71px] pl-[7px]">
        <svg width="60" height="20" viewBox="1235 708 60 20" fill="#555">
          <path d="M1236 714h1.200v7h-1.200zM1242 714v7l-4-3.500zM1257 714v7l-4-3.500zM1269 714v7l4-3.500zM1284 714v7l4-3.500zM1289 714h1.200v7h-1.200z" />
        </svg>
      </div>
      <div className="w-[68px]">
        <svg width="67" height="20" viewBox="1299 708 67 20" fill="#bdbdbd">
          <path d="M1307 712h3v3h-3zM1311 712h3v3h-3zM1315 712h3v3h-3zM1307 716h3v3h-3zM1311 716h3v3h-3zM1315 716h3v3h-3zM1307 720h3v3h-3zM1311 720h3v3h-3zM1315 720h3v3h-3zM1328 712h11v7h-11zM1328 720h3v3h-3zM1332 720h3v3h-3zM1336 720h3v3h-3z" />
          <path d="M1349 712h11v11h-11z" fill="#666" />
        </svg>
      </div>
    </div>
  );
}

function TaskIcon({ x, className = "", children }: { x: number; className?: string } & Kids) {
  return (
    <svg width="48" height="40" viewBox={`${x} 728 48 40`} fill="none" className={`shrink-0 ${className}`}>{children}</svg>
  );
}

const CROSSES: [number, number, number][] = [
  [753.500, 740, 2], [753.500, 755, 2], [746, 747.500, 2], [761, 747.500, 2], [748, 742, 2], [759, 742, 2], [748, 753, 2], [759, 753, 2],
];

const GLOBE_LIGHTS: [number, number, number][] = [
  [295, 758, 3.200], [313, 758, 2], [303, 766, 2], [277, 762, 1.600], [284, 752, 1.200], [326, 753, 1.200], [293, 745, 1], [301, 750, 1], [317, 751, 1], [288, 764, 1.200], [332, 760, 1], [307, 757, .8], [320, 762, 1.100], [286, 758, 1], [279, 755, 1], [291, 751, .8], [322, 756, .8],
];

function Taskbar() {
  return (
    <footer className="flex h-[40px] shrink-0 items-center bg-[linear-gradient(90deg,#20343c_0%,#21373f_45%,#1e2f40_65%,#1b2845_100%)] font-['Open_Sans',sans-serif] text-white">
      <TaskIcon x={0}>
        <path d="M16 742.200l6.500-1v6.300H16zM23.500 741l8.500-1.200v7.700h-8.500zM16 748.500h6.500v6.300l-6.500-1zM23.500 748.500H32v7.700l-8.500-1.200z" fill="#fff" />
      </TaskIcon>
      <div className="flex h-full w-[288px] shrink-0 items-center border border-[#c4c4c4] bg-[#f2f2f2]">
        <svg width="20" height="20" viewBox="0 0 20 20" fill="none" stroke="#222" strokeWidth="1.400" className="ml-[10px]"><circle cx="11.500" cy="7.500" r="5.300" /><path d="M7.700 11.500L1 18.200" /></svg>
        <span className="ml-[9px] whitespace-nowrap text-[15px] tracking-[-0.54px] text-[#2b2b2b]">Type here to search</span>
        <svg width="78" height="38" viewBox="257 729 78 38" className="ml-auto shrink-0">
          <defs>
            <radialGradient id="globe" cx=".6" cy=".55" r=".6"><stop offset="0" stopColor="#121820" /><stop offset=".7" stopColor="#1c2b44" /><stop offset="1" stopColor="#3a6fc0" /></radialGradient>
            <linearGradient id="halo" x1="0" x2="1"><stop offset="0" stopColor="#f6e3b0" /><stop offset=".6" stopColor="#efbb52" /><stop offset="1" stopColor="#d9a04a" /></linearGradient>
          </defs>
          <ellipse cx="306" cy="775" rx="49" ry="40" fill="url(#halo)" />
          <ellipse cx="308" cy="778" rx="48" ry="40" fill="#fbf6ea" />
          <ellipse cx="309" cy="779" rx="47" ry="39" fill="url(#globe)" />
          <path d="M263 768c6-18 20-24 31-26l-6 9-12 6-5 11z" fill="#3a74c8" />
          <path d="M285 746c15-8 35-7 51 1v22h-60c0-10 2-14 9-23z" fill="#1b1f22" />
          <path d="M312 767c6-9 16-7 23-3v6h-24z" fill="#234b86" />
          {GLOBE_LIGHTS.map(([cx, cy, r]) => (
            <g key={`${cx}-${cy}`} fill="#dfa93f"><circle cx={cx} cy={cy} r={r + 1.500} opacity=".3" /><circle cx={cx} cy={cy} r={r} /></g>
          ))}
        </svg>
      </div>
      <TaskIcon x={336}>
        <g stroke="#fff" strokeWidth="1.200">
          <path d="M352.500 740v3.500h9.500V740M352.500 756v-3.500h9.500v3.500M352.500 745.500h9.500v5h-9.500zM366.500 740v4M366.500 749v7" /><path d="M365 744.500h3v3.500h-3z" fill="#fff" stroke="none" />
        </g>
      </TaskIcon>
      <TaskIcon x={387} className="ml-[3px]">
        <defs>
          <linearGradient id="e1" x1="0" x2="1" y1=".2" y2=".5"><stop offset="0" stopColor="#2ba6e8" /><stop offset=".6" stopColor="#35c9c0" /><stop offset="1" stopColor="#66e04a" /></linearGradient>
          <linearGradient id="e2" x1="0" x2="0" y1="0" y2="1"><stop offset="0" stopColor="#1b96e0" /><stop offset="1" stopColor="#0c5fb8" /></linearGradient>
        </defs>
        <path d="M399 747a12 12 0 0 1 24 0c0 4-3 6-6.500 6-4 0-5.500-2-4-4 1-2.500-.5-5.500-4.500-5.500-4 0-8 1-9 3.500z" fill="url(#e1)" />
        <path d="M399 748c0-6 8-8.500 12-4-4 0-6 4-5 8 1 4 5 7 11 5 2-.7 4-1 3 .5A12 12 0 0 1 399 748z" fill="url(#e2)" />
        <path d="M406 751c1 5 5 8 11 6.500 2-.7 4-1.500 3.500-.3-4 5.500-14 4-14.500-6.200z" fill="#1253a0" />
      </TaskIcon>
      <TaskIcon x={436} className="ml-[1px]">
        <path d="M449 739h9l2 2h11v15h-22z" fill="#f0b429" /><path d="M449 742h22v15h-22z" fill="#fcd667" />
        <path d="M453 757v-6c0-1 1-2 2-2h10c1 0 2 1 2 2v6h-4v-3h-6v3z" fill="#3f9bdc" /><path d="M440 766h40v2h-40z" fill="#4e85c5" />
      </TaskIcon>
      <TaskIcon x={485} className="ml-[1px]">
        <path d="M503.500 743v-3.500c0-1 .5-2 2-2h7c1.500 0 2 1 2 2v3.500" stroke="#29a9e1" strokeWidth="2" /><path d="M497 742h23v15c0 1.500-1 3-3 3h-17c-2 0-3-1.500-3-3z" fill="#f5f5f5" />
        <path d="M504 746h4v4h-4z" fill="#f25022" /><path d="M509 746h4v4h-4z" fill="#7fba00" /><path d="M504 751h4v4h-4z" fill="#00a4ef" /><path d="M509 751h4v4h-4z" fill="#ffb900" />
      </TaskIcon>
      <TaskIcon x={534} className="ml-[1px]">
        <path d="M546 745l12-8.500 12 8.500v3h-24z" fill="#0d62b5" /><path d="M549 744h18v9h-18z" fill="#f0f0f0" /><path d="M546 745.500l12 7.500 12-7.500V759h-24z" fill="#2aa8ea" /><path d="M546 745.500V759l12-6z" fill="#1c8edb" /><path d="M570 745.500V759h-13l-4-3z" fill="#45c3f5" opacity=".7" />
      </TaskIcon>
      <TaskIcon x={582}>
        <path d="M598 740h17.500v18.500H598z" fill="#8fc7e3" /><path d="M596.500 739.500h15v18h-15z" fill="#c4dfee" stroke="#6aa9cc" /><circle cx="604" cy="748.500" r="6.300" fill="#ef7a1f" stroke="#f8ba85" /><path d="M602 744.500v8l6-4z" fill="#fff" />
      </TaskIcon>
      <TaskIcon x={632} className="ml-[2px]">
        <rect x="644.500" y="737" width="22.500" height="22" rx="3" fill="#f7f7f7" /><circle cx="655.700" cy="747.700" r="8.200" fill="#0c9bdc" />
        <path d="M659 741.500c-6-1-7 3-3.500 5 4 2.500 2 7-3 6M650 747l4-3M657 750l4 1" stroke="#fff" strokeWidth="1.500" />
      </TaskIcon>
      <TaskIcon x={681} className="ml-[1px]">
        <circle cx="705" cy="748" r="11" fill="#e0501d" /><circle cx="706.500" cy="745.500" r="8.300" fill="#2586c8" /><path d="M713 739c4 5 4 14-2 18 2-5 3-11 2-18z" fill="#fdc93a" />
        <path d="M694.500 742c1-2 2-3 3-3.500 0 2 1 3 3 3l3 1-2 3c2 1 5 2 5 3-1 1-3 1-4 2 2 3 7 3 9-1 1-3 1-7 0-9 4 5 4 11 0 15-5 5-14 3-17-4-1-3-1-6 0-9.500z" fill="#ee6a1f" />
        <path d="M709 741c3 4 3 9-1 11-3 2-5 0-6 0 2 3 7 4 10 1 3-4 2-9-3-12z" fill="#1a3c80" />
      </TaskIcon>
      <TaskIcon x={730} className="ml-[1px] bg-[#51616b]">
        <path d="M742 736h23v23h-23z" fill="#f2f2f2" /><path d="M764.500 736v22.500H742" stroke="#c5b9ae" />
        <g stroke="#3a74a8"><path d="M753.500 743.500v8.500M749 747.500h9" strokeWidth="1.200" />
          {CROSSES.map(([cx, cy, r]) => <path key={`${cx}-${cy}`} d={`M${cx - r} ${cy}h${r * 2}M${cx} ${cy - r}v${r * 2}`} stroke="#6a97bd" />)}
        </g>
        <path d="M730 766h48v2h-48z" fill="#4e85c5" />
      </TaskIcon>
      <TaskIcon x={779} className="ml-[1px]">
        <circle cx="803" cy="748" r="12" fill="#fbc116" /><path d="M792.600 742a12 12 0 0 1 20.800 0H803a6 6 0 0 0-5.200 9z" fill="#e33b2e" /><path d="M792.600 742a12 12 0 0 0 10 18l5.600-9a6 6 0 0 1-10.400 0z" fill="#2da24c" />
        <circle cx="803" cy="748" r="5.800" fill="#fff" /><circle cx="803" cy="748" r="4.700" fill="#2f7de9" /><path d="M783 766h40v2h-40z" fill="#4e85c5" />
      </TaskIcon>
      <TaskIcon x={897} className="ml-[70px]">
        <circle cx="921.500" cy="749.500" r="11" fill="#fff" /><circle cx="921.500" cy="749.500" r="9" fill="#0a86c8" />
        <path d="M918 747c0-5 7-5 7-1 0 2.500-3.500 2.500-3.500 5.500M921.500 753v2.500" stroke="#fff" strokeWidth="2.400" />
      </TaskIcon>
      <svg width="28" height="26" viewBox="1027 733 28 26" className="ml-[82px] shrink-0">
        <defs><linearGradient id="sun" x1="0" x2="0" y1="0" y2="1"><stop offset="0" stopColor="#ffd02a" /><stop offset="1" stopColor="#f57c1a" /></linearGradient></defs>
        <circle cx="1040" cy="746" r="10" fill="url(#sun)" />
        <path d="M1036 740.500h15M1029 744h13M1045 747.500h6M1029 748h8M1040 751.500h9M1028 752h9" stroke="#fff0c4" strokeWidth="1.500" strokeLinecap="round" />
      </svg>
      <span className="ml-[5px] w-[38px] shrink-0 whitespace-nowrap text-[13.500px] tracking-[-0.3px]">27°C</span>
      <span className="w-[53px] shrink-0 whitespace-nowrap text-[13.500px] tracking-[-0.2px]">Haze</span>
      <svg width="96" height="24" viewBox="1150 736 96 24" fill="none" stroke="#fff" strokeWidth="1.200" className="-ml-px shrink-0">
        <path d="M1153.500 751l5.500-5.500 5.500 5.500" />
        <path d="M1178.500 744.500h6.500v7h-6.500zM1185 747l3-1.500v5.500l-3-1.500zM1179 741.500c2-1.500 5-1.500 7 0M1179 754.500c2 1.500 5 1.500 7 0" />
        <path d="M1199.500 746.500h2.500l3-3v10l-3-3h-2.500zM1207 746c1 1.500 1 3.500 0 5M1210 744.500c1.500 2.500 1.500 5.500 0 8M1213 742.500c2 3.500 2 8.500 0 12" />
        <path d="M1227 744.500h11.500v8h-12v-6M1232.500 752.500v3M1229 755.500h7M1223.500 742.500h4v3h-4zM1225.500 745.500v9" />
      </svg>
      <div className="flex w-[63px] shrink-0 flex-col items-center whitespace-nowrap text-[12px] leading-[18px] tracking-[-0.5px]">
        <span>09:34</span>
        <span>12-04-2023</span>
      </div>
      <div className="relative ml-[16px] h-[40px] w-[26px]">
        <svg width="16" height="18" viewBox="0 0 16 18" className="absolute left-0 top-[12px]"><path d="M0 0h16v13h-7L5 17v-4H0z" fill="#fff" /><path d="M3 3.500h10M3 6.500h10M3 9.500h7" stroke="#1b2845" strokeWidth="1.200" /></svg>
        <span className="absolute left-[8px] top-[19px] flex size-[16px] items-center justify-center rounded-full border border-[#6b7078] bg-[#2b2f36] text-[10px] font-semibold">3</span>
      </div>
      <div className="ml-auto mr-[4px] h-full w-px bg-[#66718a]" />
    </footer>
  );
}

export default function App() {
  return (
    <div className="flex h-[768px] w-[1366px] flex-col overflow-hidden bg-white">
      <TitleBar />
      <MenuBar />
      <Toolbar />
      <div className="flex h-[593px] shrink-0 bg-[#f4f4f4]">
        <Sidebar />
        <Canvas />
        <Scrollbar />
      </div>
      <SheetTabs />
      <StatusBar />
      <Taskbar />
    </div>
  );
}
